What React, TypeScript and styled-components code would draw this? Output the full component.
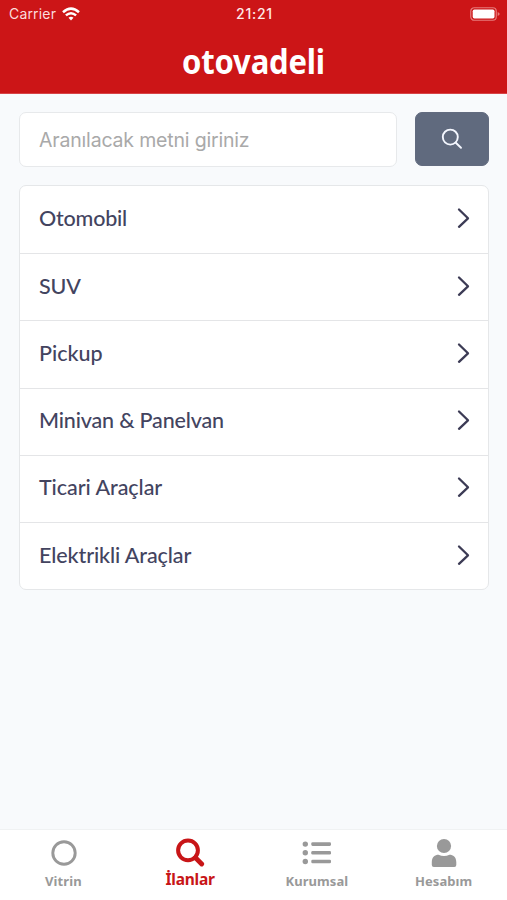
import React from "react";
import styled, { createGlobalStyle } from "styled-components";

const GlobalStyle = createGlobalStyle`
  * { box-sizing: border-box; }
  body { margin: 0; background: #f8fafc; }
`;

const Screen = styled.div`
  display: flex;
  flex-direction: column;
  width: 507px;
  height: 900px;
  overflow: hidden;
  background: #f8fafc;
  font-family: Lato, sans-serif;
`;

const Header = styled.header`
  height: 94px;
  background: #cc1517;
  border-bottom: 1px solid #d74447;
  color: #fff;
`;

const StatusBar = styled.div`
  display: grid;
  grid-template-columns: 1fr auto 1fr;
  align-items: center;
  height: 27px;
  padding: 0 7px 0 9px;
  font: 500 14px/27px Inter, sans-serif;
`;

const Carrier = styled.div`
  display: flex;
  align-items: center;
  gap: 6px;
  color: #fbdcdc;
  font-weight: 400;
  letter-spacing: 0.18px;
`;

const Clock = styled.span`
  color: #ffe9e9;
  letter-spacing: 0.75px;
`;

const Battery = styled.svg`
  justify-self: end;
`;

const Title = styled.h1`
  margin: 12px 0 0;
  text-align: center;
  font: 700 34px/44px "Noto Sans", sans-serif;
  letter-spacing: -0.2px;
  transform: scaleX(0.912);
`;

const Content = styled.main`
  flex: 1;
  padding: 18px 18px 0 19px;
`;

const SearchRow = styled.div`
  display: flex;
  gap: 18px;
`;

const SearchInput = styled.input`
  flex: 1;
  min-width: 0;
  height: 55px;
  padding: 1px 19px 0;
  border: 1.5px solid #e7e9eb;
  border-radius: 7px;
  background: #fff;
  outline: none;
  font: 400 19.5px Inter, sans-serif;
  letter-spacing: -0.18px;
  &::placeholder { color: #a9a9a9; opacity: 1; }
`;

const SearchButton = styled.button`
  display: flex;
  align-items: center;
  justify-content: center;
  width: 74px;
  height: 54px;
  padding: 0;
  border: 1px solid #626b7f;
  border-radius: 7px;
  background: #606a7e;
`;

const List = styled.ul`
  margin: 18px 0 0;
  padding: 0;
  list-style: none;
  border: 1px solid #e5e7e9;
  border-radius: 7px;
  background: #fff;
`;

const Row = styled.li`
  display: flex;
  align-items: center;
  justify-content: space-between;
  height: 67.2px;
  padding: 0 18px 3px 19px;
  color: #43445f;
  font-size: 21.5px;
  font-weight: 500;
  & + & { border-top: 1px solid #e4e5e7; }
`;

const RowLabel = styled.span<{ $spacing: number }>`
  letter-spacing: ${(p) => p.$spacing}px;
`;

const TabBar = styled.nav`
  display: grid;
  grid-template-columns: repeat(4, 1fr);
  height: 71px;
  border-top: 1px solid #f0f2f3;
  background: #fff;
`;

const Tab = styled.a<{ $active?: boolean }>`
  display: flex;
  flex-direction: column;
  align-items: center;
  padding-top: 8px;
  color: ${(p) => (p.$active ? "#c81517" : "#999")};
`;

const TabLabel = styled.span<{ $active?: boolean; $spacing: number }>`
  margin-top: ${(p) => (p.$active ? 1 : 3)}px;
  font: 700 ${(p) => (p.$active ? 15.5 : 13)}px/20px "Noto Sans", sans-serif;
  letter-spacing: ${(p) => p.$spacing}px;
`;

const WifiIcon = () => (
  <svg width="18" height="14" viewBox="0 0 18 14" fill="none" stroke="#fff" strokeWidth="2.5">
    <path d="M1 5.2Q9-2 17 5.2M3.9 8.4Q9 4 14.1 8.4" />
    <path d="M6.5 10.7Q9 8.7 11.5 10.7L9 13.4Z" fill="#fff" stroke="none" />
  </svg>
);

const BatteryIcon = () => (
  <Battery width="30" height="14" viewBox="0 0 30 14">
    <rect x=".75" y=".75" width="25.5" height="12.5" rx="3.5" fill="none" stroke="#e67b7b" strokeWidth="1.2" />
    <rect x="2.7" y="2.5" width="21.8" height="9" rx="1.7" fill="#fff" />
    <path d="M27.7 5Q31.7 7 27.7 9Z" fill="#e67b7b" />
  </Battery>
);

const SearchIcon = () => (
  <svg width="22" height="22" viewBox="0 0 22 22" fill="none" stroke="#f4f7ff" strokeWidth="1.9" strokeLinecap="round">
    <circle cx="9.3" cy="9.1" r="7.5" />
    <path d="m14.8 14.7 5.2 5.1" />
  </svg>
);

const Chevron = () => (
  <svg width="14" height="22" viewBox="0 0 14 22" fill="none" stroke="#3c3b55" strokeWidth="2.3" strokeLinecap="round" strokeLinejoin="round">
    <path d="m3 2.5 9 8.8-9 8.5" />
  </svg>
);

const icons = {
  circle: <circle cx="16" cy="15" r="11.2" fill="none" stroke="currentColor" strokeWidth="2.9" />,
  search: (
    <g fill="none" stroke="currentColor" strokeLinecap="round">
      <circle cx="13" cy="12.3" r="9.9" strokeWidth="4" />
      <path d="m20.5 19.8 6.2 6.2" strokeWidth="4.8" />
    </g>
  ),
  list: (
    <g fill="currentColor">
      {[6.1, 14.8, 23.5].map((y) => (
        <React.Fragment key={y}>
          <circle cx="3.3" cy={y} r="2.7" />
          <rect x="9.3" y={y - 1.8} width="19.7" height="3.6" rx="1.3" />
        </React.Fragment>
      ))}
    </g>
  ),
  person: (
    <g fill="currentColor">
      <circle cx="15" cy="8" r="7.1" />
      <path d="M2.8 24.3C2.8 19 6 16.8 9.5 16.8Q15 19.3 20.5 16.8C24 16.8 27.3 19 27.3 24.3V27Q27.3 29 25.3 29H4.8Q2.8 29 2.8 27Z" />
    </g>
  ),
};

const tabs: { label: string; icon: keyof typeof icons; spacing: number; active?: boolean }[] = [
  { label: "Vitrin", icon: "circle", spacing: 0.1 },
  { label: "İlanlar", icon: "search", spacing: -0.2, active: true },
  { label: "Kurumsal", icon: "list", spacing: 0.05 },
  { label: "Hesabım", icon: "person", spacing: 0.1 },
];

const categories = [
  { label: "Otomobil", spacing: -0.2 },
  { label: "SUV", spacing: -0.1 },
  { label: "Pickup", spacing: 0 },
  { label: "Minivan & Panelvan", spacing: -0.17 },
  { label: "Ticari Araçlar", spacing: -0.05 },
  { label: "Elektrikli Araçlar", spacing: -0.1 },
];

export default function App() {
  return (
    <>
      <GlobalStyle />
      <Screen lang="tr">
        <Header>
          <StatusBar>
            <Carrier>Carrier <WifiIcon /></Carrier>
            <Clock>21:21</Clock>
            <BatteryIcon />
          </StatusBar>
          <Title>otovadeli</Title>
        </Header>
        <Content>
          <SearchRow>
            <SearchInput placeholder="Aranılacak metni giriniz" />
            <SearchButton aria-label="Ara"><SearchIcon /></SearchButton>
          </SearchRow>
          <List>
            {categories.map((c) => (
              <Row key={c.label}>
                <RowLabel $spacing={c.spacing}>{c.label}</RowLabel>
                <Chevron />
              </Row>
            ))}
          </List>
        </Content>
        <TabBar>
          {tabs.map((t) => (
            <Tab key={t.label} $active={t.active}>
              <svg width="30" height="30" viewBox="0 0 30 30">{icons[t.icon]}</svg>
              <TabLabel $active={t.active} $spacing={t.spacing}>{t.label}</TabLabel>
            </Tab>
          ))}
        </TabBar>
      </Screen>
    </>
  );
}
